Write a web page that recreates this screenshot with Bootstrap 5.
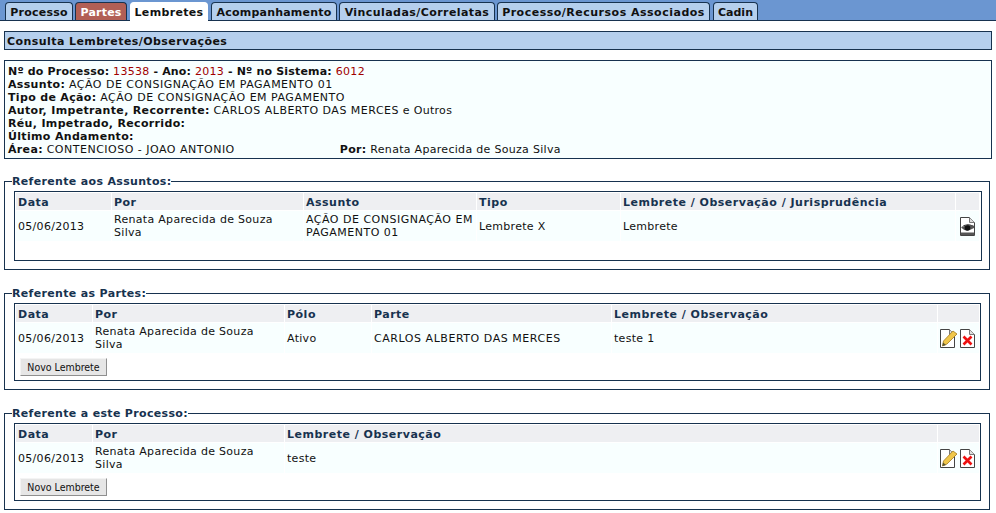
<!DOCTYPE html>
<html lang="pt-BR"><head><meta charset="utf-8"><title>Lembretes</title>
<link href="https://cdn.jsdelivr.net/npm/bootstrap@5.3.0/dist/css/bootstrap.min.css" rel="stylesheet">
<style>
html,body{height:513px;overflow:hidden}
body{font:11px/13px Verdana,"DejaVu Sans",sans-serif;color:#111;background:#fff;letter-spacing:.3px}
.caps{letter-spacing:.5px}
.tabbar{background:#6b96d1;border-bottom:1px solid #17324f;height:21px;padding:2px 0 0 5px}
.tabitem{height:18px;background:#b5cfed;border:1px solid #17324f;border-bottom:0;border-radius:4px 4px 0 0;font-weight:700;line-height:19px;color:#111;text-decoration:none;white-space:nowrap;text-align:center}
.tabitem.on{background:#fff;height:19px;border-color:#fff}
.tabitem.alt{background:#b25f55;color:#fff}
.tabitem:nth-child(1){width:68px;margin-right:2px;letter-spacing:.25px}
.tabitem:nth-child(2){width:52px;margin-right:3px;letter-spacing:.2px}
.tabitem:nth-child(3){width:78px;margin-right:3px;letter-spacing:.33px}
.tabitem:nth-child(4){width:126px;margin-right:2px;letter-spacing:.2px}
.tabitem:nth-child(5){width:156px;margin-right:2px;letter-spacing:.43px}
.tabitem:nth-child(6){width:213px;margin-right:3px;letter-spacing:.5px}
.tabitem:nth-child(7){width:45px;letter-spacing:0}
.pagetitle{margin:10px 4px 0;height:19px;border:1px solid #17324f;background:#b5cfed;font-weight:700;line-height:19px;padding-left:2px;letter-spacing:.43px}
.infobox{margin:10px 4px 0;height:99px;border:1px solid #17324f;background:#f8ffff;padding:4px 3px 0}
.infobox b{font-weight:700;letter-spacing:.33px}
.infobox .topline b{letter-spacing:.18px}
.infobox i{font-style:normal;color:#a00000}
.porcol{margin-left:105px}
.groupset{margin:17px 6px 0 4px;border:1px solid #17324f;padding:0 8px 8px 9px;min-width:0}
.groupset.lead1{margin-top:16px;padding-right:7px}
.groupset legend{float:none;width:auto;font:700 11px/13px Verdana,"DejaVu Sans",sans-serif;color:#17324f;padding:0;margin:0 0 3px -2px;letter-spacing:.33px}
.groupbox{border:1px solid #17324f}
.lead1 .groupbox{padding-right:1px}
.grid{table-layout:fixed;border-collapse:separate;border-spacing:1px;width:100%;margin:0;--bs-table-bg:transparent}
.grid th{background:#eeeff2;color:#17324f;font-weight:700;height:17px;padding:1px 2px 0;border:0;line-height:13px;box-shadow:none;vertical-align:middle;letter-spacing:.5px}
.grid td{background:#f8ffff;height:30px;padding:0 2px;border:0;vertical-align:middle;line-height:13px;color:#111;box-shadow:none}
.grid td.caps{letter-spacing:.55px}
.grid td.caps.tight{letter-spacing:.5px}
.grid td.act{padding:0 4px 0 0;text-align:right;white-space:nowrap;line-height:0}
.grid svg{vertical-align:middle}
.grid svg.pen{margin-right:2px}
.newbtn{display:block;width:87px;height:18px;margin:4px 0 4px 5px;padding:0;background:#e6e6e6;border:1px solid;border-color:#f4f4f4 #8f8f8f #8f8f8f #f4f4f4;border-radius:0;font:10.5px/15px "DejaVu Sans Condensed","DejaVu Sans",sans-serif;color:#111;letter-spacing:0}
.gap1{height:18px}
</style></head>
<body>
<nav class="tabbar d-flex">
<a class="tabitem" href="#">Processo</a><a class="tabitem alt" href="#">Partes</a><a class="tabitem on" href="#">Lembretes</a><a class="tabitem" href="#">Acompanhamento</a><a class="tabitem" href="#">Vinculadas/Correlatas</a><a class="tabitem" href="#">Processo/Recursos Associados</a><a class="tabitem" href="#">Cadin</a>
</nav>
<div class="pagetitle">Consulta Lembretes/Observações</div>
<div class="infobox">
<div class="topline"><b>Nº do Processo:</b> <i>13538</i> <b>- Ano:</b> <i>2013</i> <b>- Nº no Sistema:</b> <i>6012</i></div>
<div><b>Assunto:</b> <span class="caps">AÇÃO DE CONSIGNAÇÃO EM PAGAMENTO 01</span></div>
<div><b>Tipo de Ação:</b> <span class="caps">AÇÃO DE CONSIGNAÇÃO EM PAGAMENTO</span></div>
<div><b>Autor, Impetrante, Recorrente:</b> <span class="caps">CARLOS ALBERTO DAS MERCES</span> e Outros</div>
<div><b>Réu, Impetrado, Recorrido:</b></div>
<div><b>Último Andamento:</b></div>
<div class="d-flex"><span><b>Área:</b> <span class="caps">CONTENCIOSO - JOAO ANTONIO</span></span><span class="porcol"><b>Por:</b> Renata Aparecida de Souza Silva</span></div>
</div>

<svg width="0" height="0" class="d-block" aria-hidden="true"><defs>
<g id="pg"><path d="M.5 .5H9.5L14.5 5.5V18.5H.5Z" fill="#fff" stroke="#444"/><path d="M9.5 .5V5.5H14.5" fill="#ddd" stroke="#777"/></g>
</defs></svg>

<fieldset class="groupset lead1"><legend>Referente aos Assuntos:</legend>
<div class="groupbox"><table class="table grid">
<colgroup><col style="width:95px"><col style="width:191px"><col style="width:172px"><col style="width:143px"><col><col style="width:23px"></colgroup>
<tr><th>Data</th><th>Por</th><th>Assunto</th><th>Tipo</th><th>Lembrete / Observação / Jurisprudência</th><th></th></tr>
<tr><td>05/06/2013</td><td>Renata Aparecida de Souza Silva</td><td class="caps tight">AÇÃO DE CONSIGNAÇÃO EM PAGAMENTO 01</td><td>Lembrete X</td><td>Lembrete</td><td class="act"><svg width="15" height="19" viewBox="0 0 15 19"><use href="#pg"/><path d="M1 10.5Q6 5 14 9V11Q7 6.5 1 10.5Z" fill="#222"/><path d="M1 10.5Q6 16 14 11V9L11 8Q7 7 1 10.5Z" fill="#555"/><circle cx="7.5" cy="11" r="2.8" fill="#111"/><path d="M1 15.5H14V18H1Z" fill="#555"/></svg></td></tr>
</table><div class="gap1"></div></div>
</fieldset>

<fieldset class="groupset"><legend>Referente as Partes:</legend>
<div class="groupbox"><table class="table grid">
<colgroup><col style="width:76px"><col style="width:191px"><col style="width:86px"><col style="width:239px"><col><col style="width:41px"></colgroup>
<tr><th>Data</th><th>Por</th><th>Pólo</th><th>Parte</th><th>Lembrete / Observação</th><th></th></tr>
<tr><td>05/06/2013</td><td>Renata Aparecida de Souza Silva</td><td>Ativo</td><td class="caps">CARLOS ALBERTO DAS MERCES</td><td>teste 1</td><td class="act"><svg class="pen" width="18" height="19" viewBox="0 0 18 19"><use href="#pg"/><path d="M2.5 17L3.5 12L13 2L17 5L7 15Z" fill="#f0c64a" stroke="#a27a1e" stroke-width=".8"/><path d="M2.5 17L3 13.5L6 16Z" fill="#553"/></svg><svg width="15" height="19" viewBox="0 0 15 19"><use href="#pg"/><path d="M3.5 7.5L11.5 15.5M11.5 7.5L3.5 15.5" stroke="#ee1111" stroke-width="2.6"/></svg></td></tr>
</table><button type="button" class="newbtn">Novo Lembrete</button></div>
</fieldset>

<fieldset class="groupset"><legend>Referente a este Processo:</legend>
<div class="groupbox"><table class="table grid">
<colgroup><col style="width:76px"><col style="width:191px"><col><col style="width:41px"></colgroup>
<tr><th>Data</th><th>Por</th><th>Lembrete / Observação</th><th></th></tr>
<tr><td>05/06/2013</td><td>Renata Aparecida de Souza Silva</td><td>teste</td><td class="act"><svg class="pen" width="18" height="19" viewBox="0 0 18 19"><use href="#pg"/><path d="M2.5 17L3.5 12L13 2L17 5L7 15Z" fill="#f0c64a" stroke="#a27a1e" stroke-width=".8"/><path d="M2.5 17L3 13.5L6 16Z" fill="#553"/></svg><svg width="15" height="19" viewBox="0 0 15 19"><use href="#pg"/><path d="M3.5 7.5L11.5 15.5M11.5 7.5L3.5 15.5" stroke="#ee1111" stroke-width="2.6"/></svg></td></tr>
</table><button type="button" class="newbtn">Novo Lembrete</button></div>
</fieldset>
</body></html>
